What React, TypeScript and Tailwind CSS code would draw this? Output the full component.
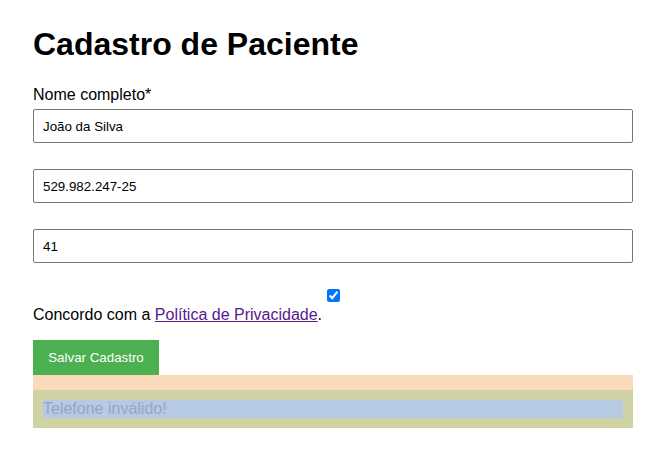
import React, { useState } from 'react';

// Patient registration form
function App() {
  const [nome, setNome] = useState('João da Silva');
  const [cpf, setCpf] = useState('529.982.247-25');
  const [telefone, setTelefone] = useState('41');
  const [aceito, setAceito] = useState(true);

  return (
    <div className="min-h-screen bg-white font-['Liberation_Sans',Arial,sans-serif] text-black">
      <div className="w-[600px] ml-[33px] pt-[26px]">
        <h1 className="text-[32px] leading-[37px] font-bold">Cadastro de Paciente</h1>

        <label className="block mt-[23px] text-[16px] leading-[18px]">Nome completo*</label>
        <input
          className="block w-full mt-[5px] h-[34px] px-[9px] border border-[#767676] rounded-[2px] text-[13.33px] outline-none"
          value={nome}
          onChange={e => setNome(e.target.value)}
        />

        <input
          className="block w-full mt-[26px] h-[34px] px-[9px] border border-[#767676] rounded-[2px] text-[13.33px] outline-none"
          value={cpf}
          onChange={e => setCpf(e.target.value)}
        />

        <input
          className="block w-full mt-[26px] h-[34px] px-[9px] border border-[#767676] rounded-[2px] text-[13.33px] outline-none"
          value={telefone}
          onChange={e => setTelefone(e.target.value)}
        />

        {/* Privacy agreement */}
        <div className="mt-[26px] flex justify-center">
          <input
            type="checkbox"
            className="w-[13px] h-[13px] accent-[#0075ff]"
            checked={aceito}
            onChange={e => setAceito(e.target.checked)}
          />
        </div>
        <p className="mt-[4px] text-[16px] leading-[18px]">
          Concordo com a{' '}
          <a href="#" className="text-[#551a8b] underline">Política de Privacidade</a>.
        </p>

        <button className="mt-[16px] h-[35px] w-[126px] bg-[#4caf50] text-white text-[13.33px]">
          Salvar Cadastro
        </button>

        {/* Error message (highlighted) */}
        <div className="bg-[#f9dbbb] pt-[15px]">
          <div className="bg-[#cfd3a4] p-[10px]">
            <div className="bg-[#b6cae3] text-[16px] leading-[18px] text-[#9ba2c6]">Telefone inválido!</div>
          </div>
        </div>
      </div>
    </div>
  );
}

export default App;
